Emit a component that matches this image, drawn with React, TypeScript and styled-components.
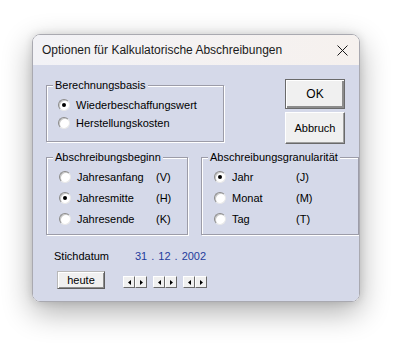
import React from 'react';
import styled, { createGlobalStyle } from 'styled-components';

const GlobalStyle = createGlobalStyle`
  html, body {
    margin: 0;
    padding: 0;
    background: #ffffff;
  }
  body {
    font-family: 'Liberation Sans', Arial, sans-serif;
    font-size: 11px;
    color: #000;
  }
`;

const Stage = styled.div`
  width: 394px;
  height: 351px;
  box-sizing: border-box;
  padding: 34px 0 0 32px;
`;

const Window = styled.div`
  width: 328px;
  height: 268px;
  box-sizing: border-box;
  border: 1px solid #a9a9b0;
  border-radius: 8px;
  overflow: hidden;
  display: flex;
  flex-direction: column;
  box-shadow: 0 10px 30px rgba(0, 0, 0, 0.32), 0 0 8px rgba(0, 0, 0, 0.12);
`;

const TitleBar = styled.div`
  height: 30px;
  flex: none;
  display: flex;
  align-items: center;
  justify-content: space-between;
  padding: 0 11px 0 9px;
  background: linear-gradient(90deg, #f2f2f6, #f6f1ee);
  font-family: 'Liberation Sans', Arial, sans-serif;
  font-size: 12px;
  color: #1a1a1a;
`;

const Body = styled.div`
  flex: 1;
  background: #d5d9e9;
  padding: 14px 0 0 13px;
  display: flex;
  flex-direction: column;
`;

const TopRow = styled.div`
  display: flex;
  align-items: flex-start;
`;

const MidRow = styled.div`
  display: flex;
  gap: 13px;
  margin-top: 13px;
`;

const Group = styled.div<{ $w: number; $dense?: boolean }>`
  position: relative;
  width: ${(p) => p.$w}px;
  box-sizing: border-box;
  border: 1px solid #9c9ca8;
  box-shadow: 1px 1px 0 #fff, inset 1px 1px 0 #fff;
  padding: ${(p) => (p.$dense ? '10px 0 9px 11px' : '8px 0 5px 12px')};
`;

const Legend = styled.span`
  position: absolute;
  top: -7px;
  left: 6px;
  line-height: 13px;
  padding: 0 2px;
  background: #d5d9e9;
`;

const RadioRow = styled.div<{ $h: number; $textW: number }>`
  height: ${(p) => p.$h}px;
  display: grid;
  grid-template-columns: 12px ${(p) => p.$textW}px auto;
  column-gap: 6px;
  align-items: center;
`;

const RadioDot = styled.span<{ $on?: boolean }>`
  width: 12px;
  height: 12px;
  box-sizing: border-box;
  border-radius: 50%;
  border: 1px solid;
  border-color: #8a8a8a #e8e8e8 #e8e8e8 #8a8a8a;
  background: #fff;
  box-shadow: inset 1px 1px 0 #c8c8c8;
  display: flex;
  align-items: center;
  justify-content: center;
  &::after {
    content: '';
    width: 4px;
    height: 4px;
    border-radius: 50%;
    background: ${(p) => (p.$on ? '#000' : 'transparent')};
  }
`;

const ButtonColumn = styled.div`
  margin-left: 61px;
  width: 60px;
  display: flex;
  flex-direction: column;
  gap: 3px;
`;

const PushButton = styled.div<{ $h: number; $default?: boolean }>`
  height: ${(p) => p.$h}px;
  box-sizing: border-box;
  background: #f0f0f0;
  display: flex;
  align-items: center;
  justify-content: center;
  font-size: ${(p) => (p.$default ? '12px' : '11px')};
  border: 1px solid;
  border-color: ${(p) => (p.$default ? '#6a6a6a' : '#ffffff #6a6a6a #6a6a6a #ffffff')};
  box-shadow: ${(p) =>
    p.$default
      ? 'inset 1px 1px 0 #fff, inset -2px -2px 0 #8c8c8c'
      : 'inset -1px -1px 0 #a0a0a0'};
`;

const Footer = styled.div`
  margin-top: 15px;
  display: grid;
  grid-template-columns: 77px auto;
  row-gap: 8px;
  align-items: end;
  line-height: 13px;
`;

const FooterLabel = styled.span`
  padding-left: 8px;
`;

const DateText = styled.div`
  display: flex;
  gap: 4px;
  padding-left: 12px;
  color: #1f3c9c;
`;

const TodayButton = styled.div`
  margin-left: 11px;
  width: 48px;
  height: 18px;
  box-sizing: border-box;
  background: #f0f0f0;
  display: flex;
  align-items: center;
  justify-content: center;
  border: 1px solid;
  border-color: #b8b8b8 #5e5e5e #5e5e5e #b8b8b8;
  box-shadow: inset 1px 1px 0 #fff, inset -1px -1px 0 #8c8c8c;
`;

const SpinGroup = styled.div`
  display: flex;
  gap: 6px;
  margin-bottom: 1px;
`;

const SpinPair = styled.div`
  display: flex;
`;

const SpinButton = styled.div`
  width: 12px;
  height: 12px;
  box-sizing: border-box;
  background: #f0f0f0;
  border: 1px solid;
  border-color: #fff #6a6a6a #6a6a6a #fff;
  display: flex;
  align-items: center;
  justify-content: center;
`;

const Arrow = ({ dir }: { dir: 'left' | 'right' }) => (
  <svg width="3" height="5" viewBox="0 0 3 5">
    <path d={dir === 'left' ? 'M3 0 L0 2.5 L3 5 Z' : 'M0 0 L3 2.5 L0 5 Z'} fill="#000" />
  </svg>
);

const CloseIcon = () => (
  <svg width="11" height="11" viewBox="0 0 11 11">
    <path d="M0.5 0.5 L10.5 10.5 M10.5 0.5 L0.5 10.5" stroke="#1a1a1a" strokeWidth="1" />
  </svg>
);

interface Option {
  label: string;
  key?: string;
  on?: boolean;
}

const basis: Option[] = [
  { label: 'Wiederbeschaffungswert', on: true },
  { label: 'Herstellungskosten' },
];

const beginn: Option[] = [
  { label: 'Jahresanfang', key: '(V)' },
  { label: 'Jahresmitte', key: '(H)', on: true },
  { label: 'Jahresende', key: '(K)' },
];

const granularitaet: Option[] = [
  { label: 'Jahr', key: '(J)', on: true },
  { label: 'Monat', key: '(M)' },
  { label: 'Tag', key: '(T)' },
];

function Options({ items, h, textW }: { items: Option[]; h: number; textW: number }) {
  return (
    <>
      {items.map((o) => (
        <RadioRow key={o.label} $h={h} $textW={textW}>
          <RadioDot $on={o.on} />
          <span>{o.label}</span>
          <span>{o.key}</span>
        </RadioRow>
      ))}
    </>
  );
}

export default function App() {
  return (
    <Stage>
      <GlobalStyle />
      <Window>
        <TitleBar>
          <span>Optionen für Kalkulatorische Abschreibungen</span>
          <CloseIcon />
        </TitleBar>
        <Body>
          <TopRow>
            <Group $w={178} $dense style={{ marginTop: 6 }}>
              <Legend>Berechnungsbasis</Legend>
              <Options items={basis} h={18} textW={140} />
            </Group>
            <ButtonColumn>
              <PushButton $h={30} $default>OK</PushButton>
              <PushButton $h={32}>Abbruch</PushButton>
            </ButtonColumn>
          </TopRow>
          <MidRow>
            <Group $w={142}>
              <Legend>Abschreibungsbeginn</Legend>
              <Options items={beginn} h={21} textW={73} />
            </Group>
            <Group $w={158}>
              <Legend>Abschreibungsgranularität</Legend>
              <Options items={granularitaet} h={21} textW={58} />
            </Group>
          </MidRow>
          <Footer>
            <FooterLabel>Stichdatum</FooterLabel>
            <DateText>
              <span>31</span>
              <span>.</span>
              <span>12</span>
              <span>.</span>
              <span>2002</span>
            </DateText>
            <TodayButton>heute</TodayButton>
            <SpinGroup>
              {[0, 1, 2].map((i) => (
                <SpinPair key={i}>
                  <SpinButton><Arrow dir="left" /></SpinButton>
                  <SpinButton><Arrow dir="right" /></SpinButton>
                </SpinPair>
              ))}
            </SpinGroup>
          </Footer>
        </Body>
      </Window>
    </Stage>
  );
}
